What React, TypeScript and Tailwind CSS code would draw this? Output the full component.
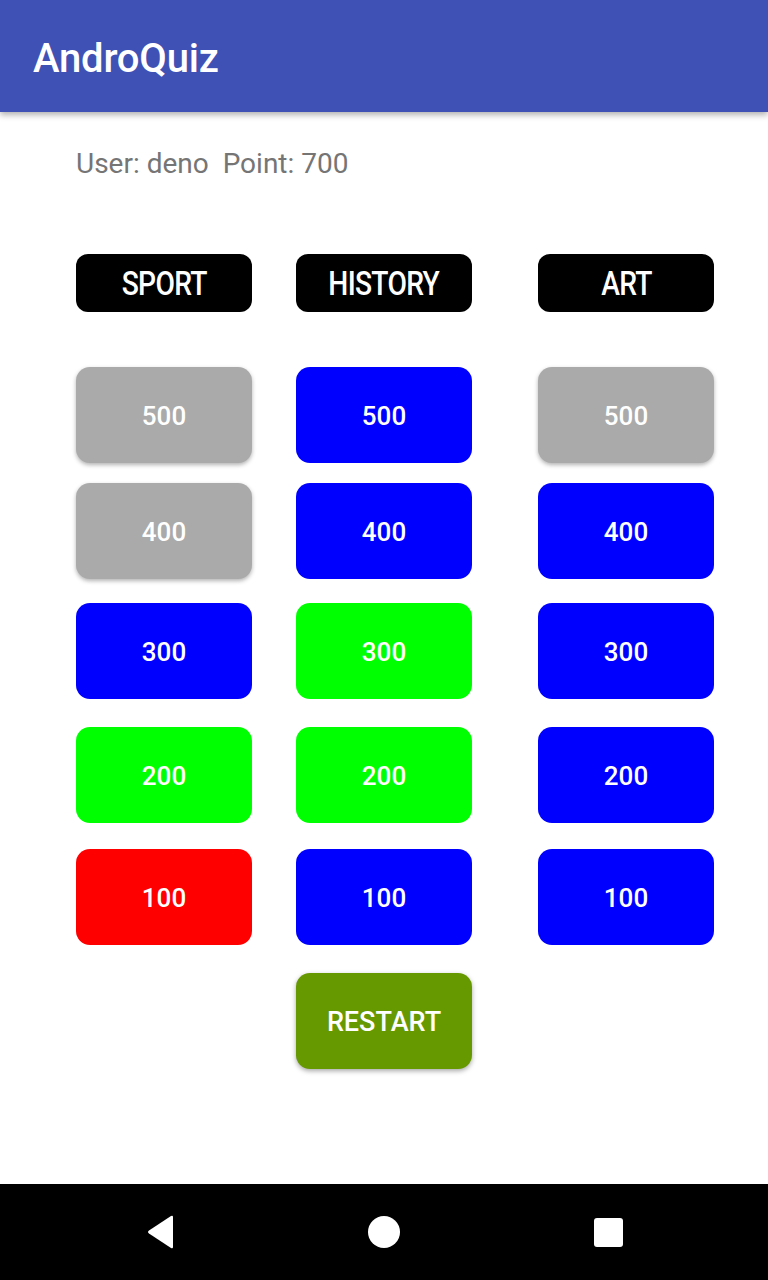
const font = { fontFamily: "Roboto, 'Noto Sans', sans-serif" };

type Tile = { value: number; color: string };

// colours per row, columns: sport, history, art
const rows: { mt: string; tiles: Tile[] }[] = [
  { mt: "mt-[55px]", tiles: [{ value: 500, color: "gray" }, { value: 500, color: "blue" }, { value: 500, color: "gray" }] },
  { mt: "mt-[20px]", tiles: [{ value: 400, color: "gray" }, { value: 400, color: "blue" }, { value: 400, color: "blue" }] },
  { mt: "mt-[24px]", tiles: [{ value: 300, color: "blue" }, { value: 300, color: "green" }, { value: 300, color: "blue" }] },
  { mt: "mt-[28px]", tiles: [{ value: 200, color: "green" }, { value: 200, color: "green" }, { value: 200, color: "blue" }] },
  { mt: "mt-[26px]", tiles: [{ value: 100, color: "red" }, { value: 100, color: "blue" }, { value: 100, color: "blue" }] },
];

const colorClass: Record<string, string> = {
  gray: "bg-[#aaaaaa] shadow-[0_2px_4px_rgba(0,0,0,0.3)]",
  blue: "bg-[#0000ff]",
  green: "bg-[#00ff00]",
  red: "bg-[#ff0000]",
};

const colMargin = ["", "ml-[44px]", "ml-[66px]"];

function Header({ label, className }: { label: string; className: string }) {
  return (
    <div className={`w-[176px] h-[58px] bg-black rounded-[12px] flex items-center justify-center ${className}`}>
      <span className="inline-block text-white text-[34px] font-medium leading-none scale-x-[0.83] tracking-tight" style={font}>
        {label}
      </span>
    </div>
  );
}

export default function App() {
  return (
    <div className="w-[768px] h-[1280px] flex flex-col bg-white overflow-hidden" style={font}>
      <div className="h-[112px] bg-[#3f51b5] flex items-center pl-[33px] pt-[5px] shadow-[0_3px_6px_rgba(0,0,0,0.3)] z-10">
        <span className="text-white text-[40px] font-medium tracking-[-0.2px]">AndroQuiz</span>
      </div>

      <div className="flex-1 flex flex-col pl-[76px]">
        <div className="mt-[34px] h-[36px] flex items-center text-[28px] text-[#757575] whitespace-pre">
          User: deno  Point: 700
        </div>

        <div className="flex mt-[72px]">
          <Header label="SPORT" className="" />
          <Header label="HISTORY" className="ml-[44px]" />
          <Header label="ART" className="ml-[66px]" />
        </div>

        {rows.map((row, ri) => (
          <div key={ri} className={`flex ${row.mt}`}>
            {row.tiles.map((t, ci) => (
              <div
                key={ci}
                className={`w-[176px] h-[96px] rounded-[14px] flex items-center justify-center pt-[3px] text-white text-[26px] font-medium ${colorClass[t.color]} ${colMargin[ci]}`}
              >
                {t.value}
              </div>
            ))}
          </div>
        ))}

        <div className="flex mt-[28px]">
          <div className="ml-[220px] w-[176px] h-[96px] rounded-[14px] bg-[#669900] flex items-center justify-center pt-[3px] text-white text-[27px] font-medium shadow-[0_2px_5px_rgba(0,0,0,0.35)]">
            RESTART
          </div>
        </div>
      </div>

      <div className="h-[96px] bg-black flex items-center justify-center">
        <div className="w-[224px] flex justify-center">
          <svg width="30" height="34" viewBox="0 0 30 34" className="ml-[2px]">
            <path d="M27 2 L27 32 Q27 34 25 33 L3 18.5 Q1 17 3 15.5 L25 1 Q27 0 27 2 Z" fill="white" />
          </svg>
        </div>
        <div className="w-[224px] flex justify-center">
          <div className="w-[32px] h-[32px] rounded-full bg-white" />
        </div>
        <div className="w-[224px] flex justify-center">
          <div className="w-[29px] h-[29px] rounded-[3px] bg-white" />
        </div>
      </div>
    </div>
  );
}
